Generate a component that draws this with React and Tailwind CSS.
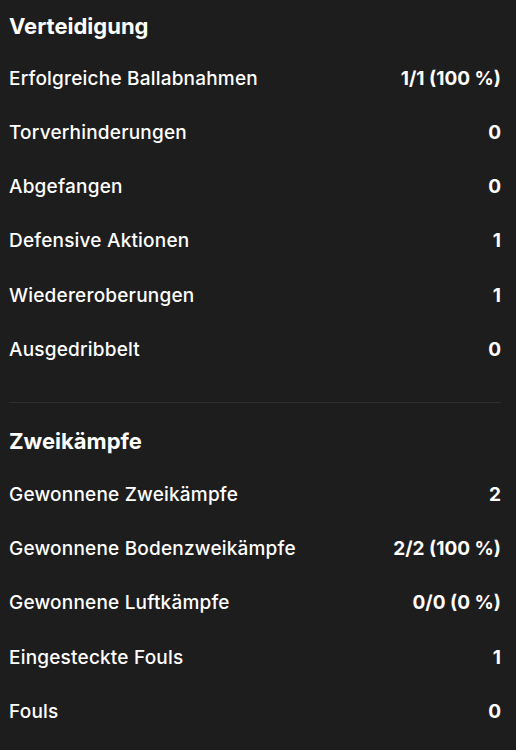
import React from "react";

const sections = [
  {
    title: "Verteidigung",
    rows: [
      ["Erfolgreiche Ballabnahmen", "1/1 (100 %)"],
      ["Torverhinderungen", "0"],
      ["Abgefangen", "0"],
      ["Defensive Aktionen", "1"],
      ["Wiedereroberungen", "1"],
      ["Ausgedribbelt", "0"],
    ],
  },
  {
    title: "Zweikämpfe",
    rows: [
      ["Gewonnene Zweikämpfe", "2"],
      ["Gewonnene Bodenzweikämpfe", "2/2 (100 %)"],
      ["Gewonnene Luftkämpfe", "0/0 (0 %)"],
      ["Eingesteckte Fouls", "1"],
      ["Fouls", "0"],
    ],
  },
];

const StatRow = ({ label, value }) => (
  <div className="flex h-[54.2px] items-center justify-between">
    <span className="text-[19px] font-medium tracking-[0.2px] text-white">{label}</span>
    <span className="text-[19px] font-bold text-white">{value}</span>
  </div>
);

export default function App() {
  return (
    <div
      className="min-h-[750px] w-full bg-[#1d1d1d] pl-[9px] pr-[15px]"
      style={{ fontFamily: "Inter, 'Noto Sans', sans-serif" }}
    >
      {sections.map((section, i) => (
        <div key={section.title}>
          {i > 0 && <div className="mt-[25px] h-px bg-[#2f2f2f]" />}
          <div className={i > 0 ? "flex h-[65px] items-end pb-[16px]" : "flex h-[52px] items-center"}>
            <h2 className="text-[22px] font-bold leading-none text-white">{section.title}</h2>
          </div>
          {section.rows.map(([label, value]) => (
            <StatRow key={label} label={label} value={value} />
          ))}
        </div>
      ))}
    </div>
  );
}
